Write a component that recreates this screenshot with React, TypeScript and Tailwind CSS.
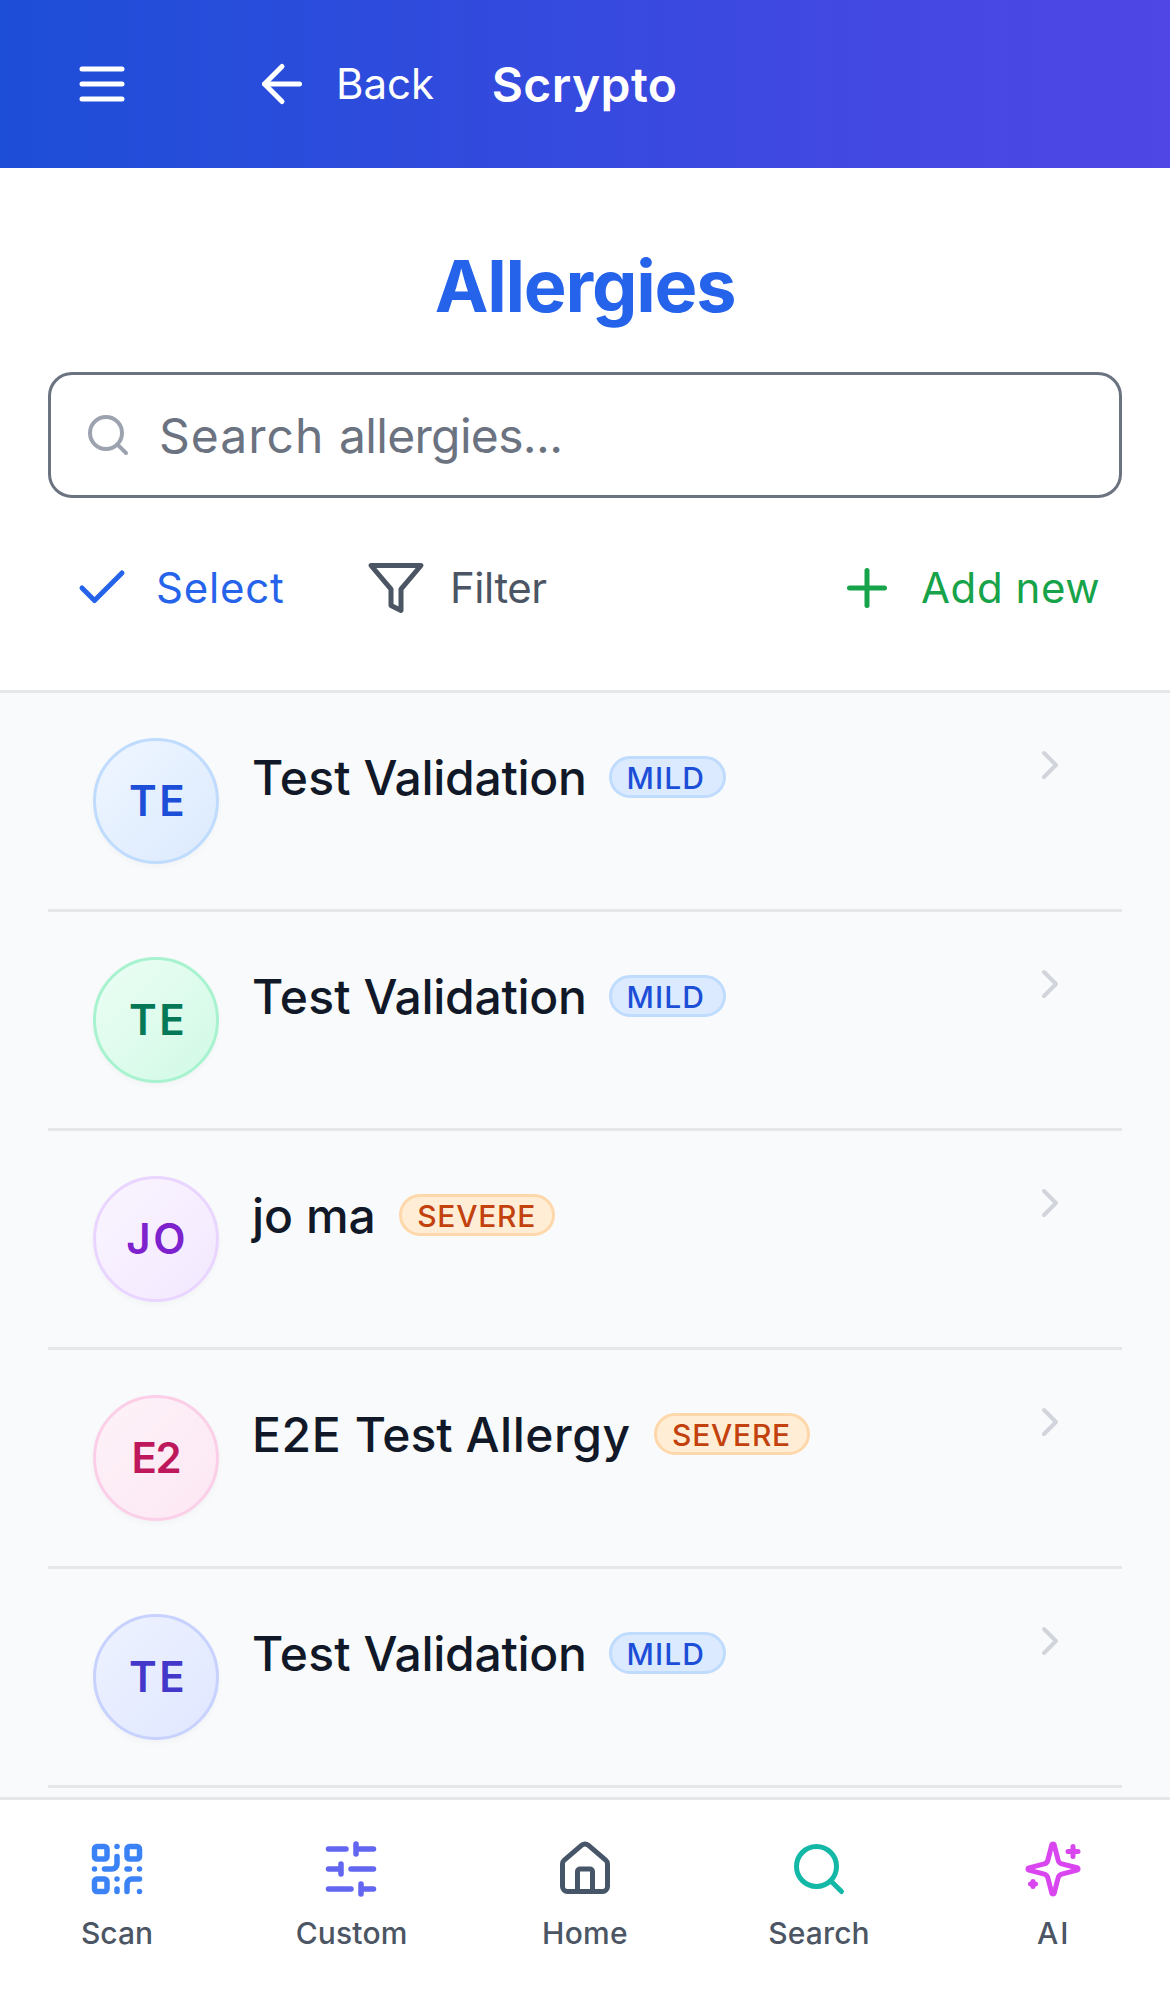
import React from "react";
import { ArrowLeft, Search, Check, Plus, ChevronRight, QrCode, House } from "lucide-react";

function StrokeIcon({ d, className, width = 2 }: { d: string; className?: string; width?: number }) {
  return (
    <svg viewBox="0 0 24 24" fill="none" stroke="currentColor" strokeWidth={width} strokeLinecap="round" strokeLinejoin="round" className={className}>
      <path d={d} />
    </svg>
  );
}

const MENU = "M4 6h16M4 12h16M4 18h16";
const FUNNEL = "M22 3H2l8 9.46V19l4 2v-8.54z";
const SLIDERS = "M21 4h-7M10 4H3M21 12h-9M8 12H3M21 20h-5M12 20H3M14 2v4M8 10v4M16 18v4";
const SPARKLES =
  "M9.937 15.5A2 2 0 0 0 8.5 14.063l-6.135-1.582a.5.5 0 0 1 0-.962L8.5 9.936A2 2 0 0 0 9.937 8.5l1.582-6.135a.5.5 0 0 1 .963 0L14.063 8.5A2 2 0 0 0 15.5 9.937l6.135 1.581a.5.5 0 0 1 0 .964L15.5 14.063a2 2 0 0 0-1.437 1.437l-1.582 6.135a.5.5 0 0 1-.963 0zM20 3v4M22 5h-4M4 17v2M5 18H3";

const testValidation = (
  <>
    <span className="tracking-[0.08px]">Test </span>
    <span className="-ml-[0.2px] tracking-[-0.1px]">Validation</span>
  </>
);

const rows = [
  { initials: "TE", name: testValidation, severity: "MILD", avatar: "from-[#eff6ff] to-[#dbeafe] border-[#bfdbfe] text-[#1d4ed8] tracking-[0.85px] pl-[1.4px]" },
  { initials: "TE", name: testValidation, severity: "MILD", avatar: "from-[#ecfdf5] to-[#d1fae5] border-[#a7f3d0] text-[#047857] tracking-[0.85px] pl-[1.4px]" },
  { initials: "JO", name: "jo ma", severity: "SEVERE", avatar: "from-[#faf5ff] to-[#f3e8ff] border-[#e9d5ff] text-[#7e22ce] tracking-[0.9px] pl-[0.9px]" },
  {
    initials: "E2",
    name: (
      <>
        <span className="tracking-[0.2px]">E2E </span>Test <span className="tracking-[0.18px]">Allergy</span>
      </>
    ),
    severity: "SEVERE",
    avatar: "from-[#fdf2f8] to-[#fce7f3] border-[#fbcfe8] text-[#be185d] tracking-[-0.4px]",
  },
  { initials: "TE", name: testValidation, severity: "MILD", avatar: "from-[#eef2ff] to-[#e0e7ff] border-[#c7d2fe] text-[#4338ca] tracking-[0.85px] pl-[1.4px]" },
];

const badgeStyles: Record<string, string> = {
  MILD: "w-[39px] -ml-[0.6px] pl-[4.9px] tracking-[0.35px] bg-[#dbeafe] border-[#bfdbfe] text-[#1d4ed8]",
  SEVERE: "w-[52px] pl-[4.8px] tracking-[0.25px] bg-[#ffedd5] border-[#fed7aa] text-[#c2410c]",
};

const tabs = [
  { label: "Scan", spacing: "", icon: <QrCode strokeWidth={2.2} className="size-5 text-[#3b82f6]" /> },
  { label: "Custom", spacing: "tracking-[0.05px] pl-[0.4px]", icon: <StrokeIcon d={SLIDERS} width={2.2} className="size-5 text-[#6366f1]" /> },
  { label: "Home", spacing: "tracking-[0.1px]", icon: <House className="size-5 text-[#475569]" /> },
  { label: "Search", spacing: "tracking-[0.05px]", icon: <Search className="size-5 text-[#14b8a6]" /> },
  { label: "AI", spacing: "tracking-[0.6px] pl-[0.4px]", icon: <StrokeIcon d={SPARKLES} className="size-5 text-[#d946ef]" /> },
];

export default function App() {
  return (
    <div className="h-[1992px] w-[1170px] overflow-hidden">
      <div className="flex h-[664px] w-[390px] origin-top-left scale-[3] flex-col overflow-hidden bg-[#f9fafb] font-['Inter',sans-serif]">
        <header className="flex h-14 shrink-0 items-center bg-linear-to-r/srgb from-[#1d4ed8] to-[#4f46e5] pl-6 text-white">
          <StrokeIcon d={MENU} className="size-5" />
          <button className="ml-10 flex items-center gap-2 text-sm">
            <ArrowLeft className="size-5" />
            Back
          </button>
          <span className="ml-[19.2px] text-base font-semibold tracking-[0.14px]">Scrypto</span>
        </header>

        <section className="shrink-0 border-b border-[#e5e7eb] bg-white px-4 pt-6 pb-4">
          <h1 className="text-center text-2xl font-bold tracking-[-0.4px] text-[#2563eb]">Allergies</h1>
          <div className="mt-3 flex h-[42px] items-center gap-[9px] rounded-lg border border-[#6b7280] pl-[11px]">
            <Search className="size-4 text-[#9ca3af]" />
            <span className="text-base text-[#6b7280]">
              <span className="tracking-[0.34px]">Search </span>
              <span className="tracking-[-0.22px]">allergies...</span>
            </span>
          </div>
          <div className="mt-3 flex h-9 items-center px-2 text-sm">
            <button className="flex items-center gap-2 text-[#2563eb]">
              <Check className="size-5" />
              <span className="w-[42px] text-left tracking-[0.26px]">Select</span>
            </button>
            <button className="ml-7 flex items-center gap-2 text-[#4b5563]">
              <StrokeIcon d={FUNNEL} className="size-5" />
              <span className="tracking-[-0.15px]">Filter</span>
            </button>
            <button className="ml-auto flex items-center gap-2 text-[#16a34a]">
              <Plus className="size-5" />
              <span className="w-[59px] text-left whitespace-nowrap tracking-[0.2px]">Add new</span>
            </button>
          </div>
        </section>

        <main className="h-[368px] shrink-0 overflow-hidden px-4">
          {rows.map((r, i) => (
            <div key={i} className="flex h-[73px] border-b border-[#e5e7eb] px-[15px] pt-[15px]">
              <div className={`flex size-[42px] shrink-0 items-center justify-center rounded-full border bg-linear-to-br/srgb text-sm font-semibold shadow-[0_1px_2px_rgba(0,0,0,0.03)] ${r.avatar}`}>
                {r.initials}
              </div>
              <div className="ml-[11px] flex h-[26px] flex-1 items-center gap-2">
                <span className="text-base font-medium text-[#111827]">{r.name}</span>
                <span className={`flex h-[14px] items-center rounded-full border text-[10px] font-medium ${badgeStyles[r.severity]}`}>
                  {r.severity}
                </span>
              </div>
              <ChevronRight className="mt-px mr-px size-4 text-[#d1d5db]" />
            </div>
          ))}
        </main>

        <nav className="grid h-[65px] shrink-0 grid-cols-5 border-t border-[#e5e7eb] bg-white">
          {tabs.map((t) => (
            <div key={t.label} className="flex flex-col items-center pt-[13px]">
              {t.icon}
              <span className={`mt-1 text-[10px] leading-[15px] font-medium text-[#4b5563] ${t.spacing}`}>{t.label}</span>
            </div>
          ))}
        </nav>
      </div>
    </div>
  );
}
